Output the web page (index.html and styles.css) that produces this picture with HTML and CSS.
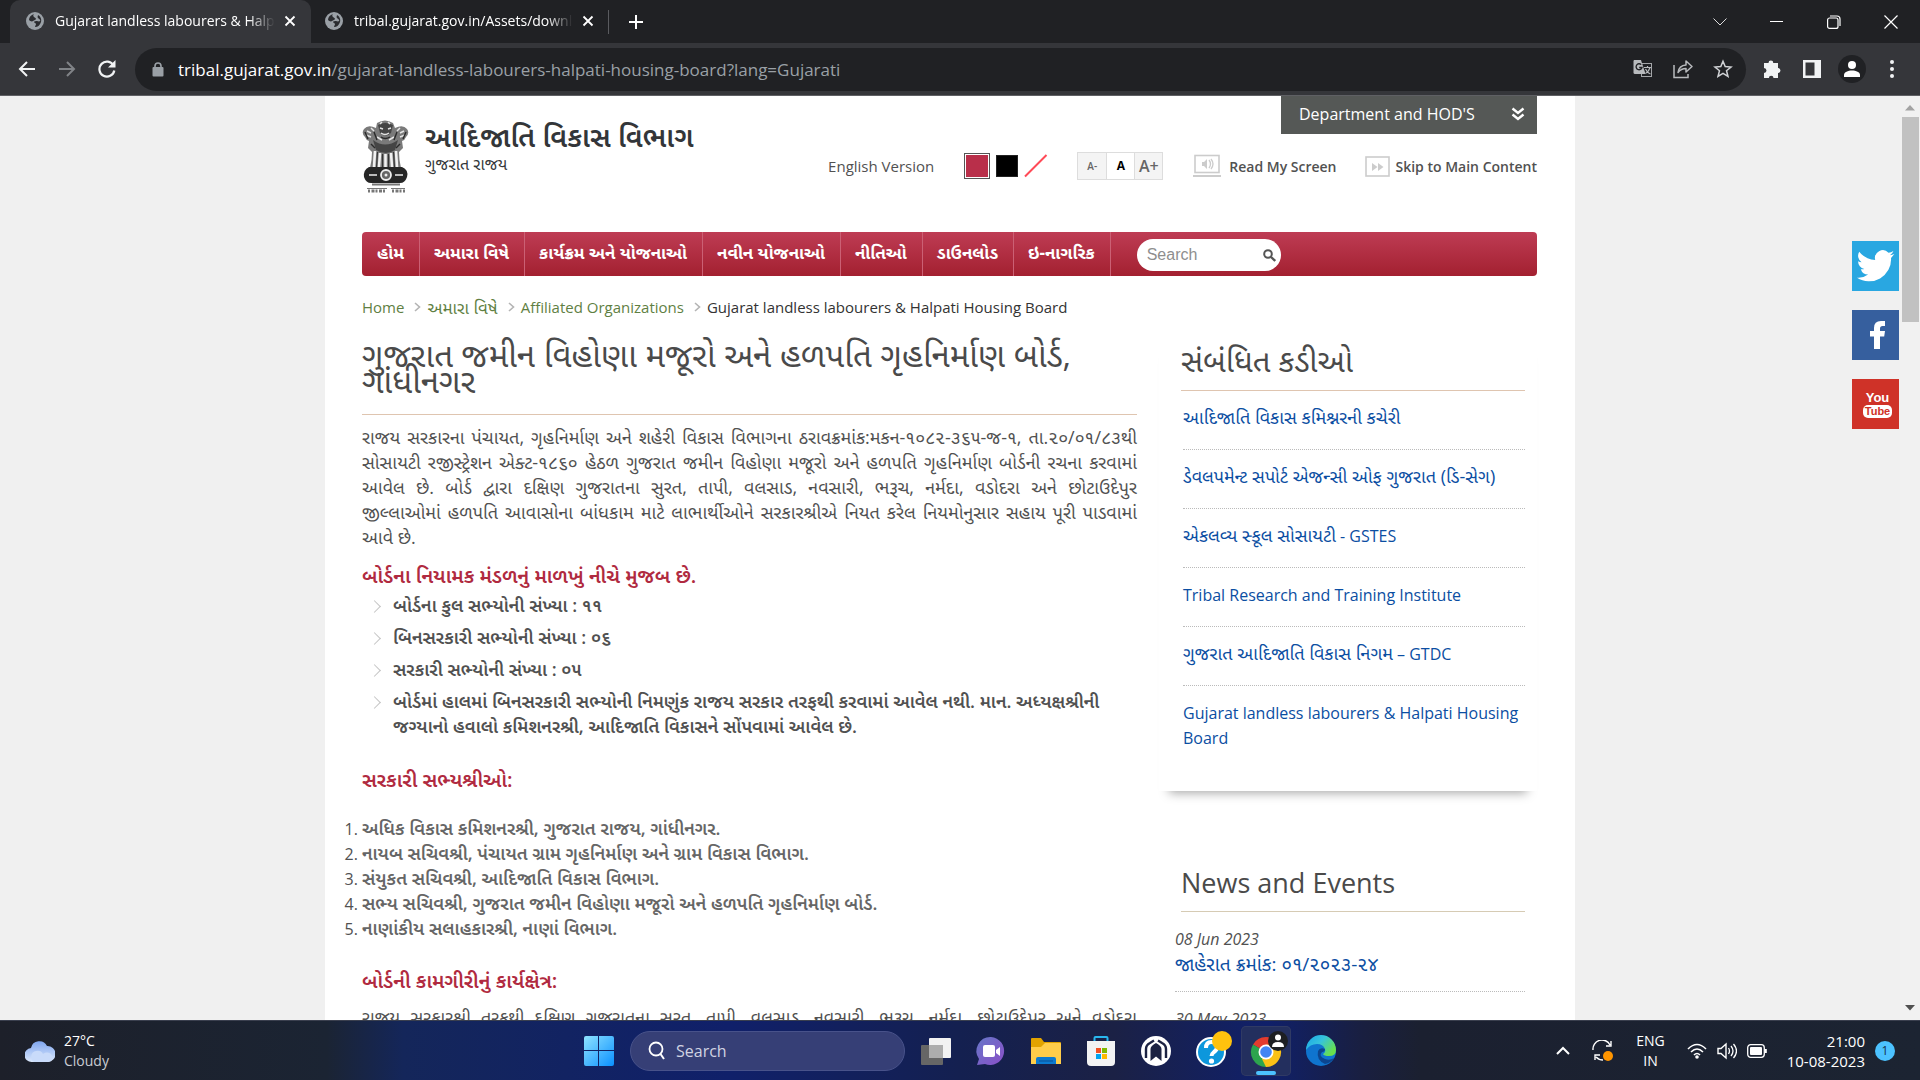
FILE: index.html
```html
<!DOCTYPE html>
<html lang="gu">
<head>
<meta charset="utf-8">
<title>Gujarat landless labourers &amp; Halpati Housing Board</title>
<link rel="stylesheet" href="styles.css">
</head>
<body>
<svg width="0" height="0" class="defs" aria-hidden="true">
  <symbol id="globe" viewBox="0 0 18 18"><circle cx="9" cy="9" r="9" fill="#9aa0a6"/><path d="M8 2c-1 1-1 2 0 3s2 1 2 2-2 1-3 2-3 0-4-1C3 5 5 3 8 2zM12 3c2 1 4 4 3 7-1 3-3 5-6 5 0-1 1-2 1-3s-2-1-2-2 2-1 3-1 2 1 3 0-1-2-2-3 0-2 0-3z" fill="#2b2c30"/></symbol>
  <symbol id="cross" viewBox="0 0 12 12"><path d="M1.500 1.500l9 9M10.500 1.500l-9 9" stroke="#fff" stroke-width="1.800"/></symbol>
  <symbol id="crumb" viewBox="0 0 7 10"><path d="M1 1l4.500 4L1 9" fill="none" stroke="#b4b4b4" stroke-width="1.600"/></symbol>
</svg>

<header class="browser">
  <div class="tabs">
    <div class="tab active"><svg class="fav"><use href="#globe"/></svg><span class="tab-text">Gujarat landless labourers &amp; Halpati</span><button class="plain" aria-label="Close tab"><svg width="12" height="12"><use href="#cross"/></svg></button></div>
    <div class="tab"><svg class="fav"><use href="#globe"/></svg><span class="tab-text">tribal.gujarat.gov.in/Assets/downloads</span><button class="plain" aria-label="Close tab"><svg width="12" height="12"><use href="#cross"/></svg></button></div>
    <button class="plain new-tab" aria-label="New tab"><svg width="16" height="16" viewBox="0 0 16 16"><path d="M8 1v14M1 8h14" stroke="#fff" stroke-width="2"/></svg></button>
    <div class="window-buttons">
      <button class="plain" aria-label="Search tabs"><svg width="14" height="8" viewBox="0 0 14 8"><path d="M.5.5L7 7 13.500.5" fill="none" stroke="#ddd"/></svg></button>
      <button class="plain" aria-label="Minimise"><svg width="13" height="13" viewBox="0 0 13 13"><path d="M0 6.500h13" stroke="#fff"/></svg></button>
      <button class="plain" aria-label="Restore"><svg width="14" height="14" viewBox="0 0 14 14"><rect x=".6" y="3" width="10.400" height="10.400" rx="2" fill="none" stroke="#fff" stroke-width="1.200"/><path d="M3 1h7q3 0 3 3v7" fill="none" stroke="#fff" stroke-width="1.200"/></svg></button>
      <button class="plain" aria-label="Close"><svg width="14" height="14" viewBox="0 0 14 14"><path d="M.5.5l13 13M13.500.5l-13 13" stroke="#fff" stroke-width="1.200"/></svg></button>
    </div>
  </div>
  <div class="toolbar">
    <button class="plain tool" aria-label="Back"><svg width="18" height="16" viewBox="0 0 18 16"><path d="M17 8H2M9 1L2 8l7 7" fill="none" stroke="#f1f3f4" stroke-width="2"/></svg></button>
    <button class="plain tool" aria-label="Forward"><svg width="18" height="16" viewBox="0 0 18 16"><path d="M1 8h15M9 1l7 7-7 7" fill="none" stroke="#808387" stroke-width="2"/></svg></button>
    <button class="plain tool" aria-label="Reload"><svg width="18" height="18" viewBox="0 0 18 18"><path d="M15.500 5.500A7.500 7.500 0 1 0 16.300 10.500" fill="none" stroke="#f1f3f4" stroke-width="2.200"/><path d="M17.500 0v7.500H10z" fill="#f1f3f4"/></svg></button>
    <div class="omnibox">
      <svg width="12" height="15" viewBox="0 0 12 15"><rect x=".5" y="5" width="11" height="9.500" rx="1" fill="#9aa0a6"/><path d="M3 6V4a3 3 0 0 1 6 0v2" fill="none" stroke="#9aa0a6" stroke-width="1.600"/></svg>
      <span class="url"><b>tribal.gujarat.gov.in</b>/gujarat-landless-labourers-halpati-housing-board?lang=Gujarati</span>
      <svg width="20" height="20" viewBox="0 0 20 20"><rect x="8.500" y="4.500" width="10" height="13" fill="none" stroke="#a3a5a8"/><path d="M1 1h7l4.500 14H2q-1.500 0-1.500-1.500V2z" fill="#b8babd"/><path d="M8.200 5.600A3 3 0 1 0 9 8.500H6.200" fill="none" stroke="#202124" stroke-width="1.300"/><path d="M11 8.500h7M14.500 7v1.500M17 8.500q-1 4-4.500 6M12.500 10q2 4 5 5" fill="none" stroke="#b8babd" stroke-width="1.200"/></svg>
      <svg width="20" height="20" viewBox="0 0 20 20"><path d="M1 6v12.500h14V15" fill="none" stroke="#b8babd" stroke-width="1.500"/><path d="M5 13.500q1-7 8-7.500V2l6 5.500-6 5.500V9.500q-5 0-8 4z" fill="none" stroke="#b8babd" stroke-width="1.500" stroke-linejoin="round"/></svg>
      <svg width="20" height="20" viewBox="0 0 20 20"><path d="M10 2.200l2.200 5.400 5.800.4-4.500 3.700 1.500 5.700-5-3.100-5 3.100 1.500-5.700L2 8l5.800-.4z" fill="none" stroke="#d0d2d5" stroke-width="1.500"/></svg>
    </div>
    <button class="plain tool" aria-label="Extensions"><svg width="20" height="20" viewBox="0 0 20 20"><path d="M2 4h4.500a2.400 2.400 0 0 1 4.800 0H16v5a2.500 2.500 0 0 1 0 5v5h-4.500a2.300 2.300 0 0 0-4.600 0H2v-5a2.400 2.400 0 0 0 0-5z" fill="#f1f3f4"/></svg></button>
    <button class="plain tool" aria-label="Side panel"><svg width="18" height="18" viewBox="0 0 18 18"><path fill="#f1f3f4" fill-rule="evenodd" d="M0 0h18v18H0zM2.500 2.500v13h9v-13z"/></svg></button>
    <button class="plain tool" aria-label="Profile"><svg width="28" height="28" viewBox="0 0 28 28"><circle cx="14" cy="14" r="14" fill="#202124"/><circle cx="14" cy="10" r="4" fill="#fff"/><path d="M6 22v-2c0-6 16-6 16 0v2z" fill="#fff"/></svg></button>
    <button class="plain tool" aria-label="Menu"><svg width="4" height="18" viewBox="0 0 4 18"><circle cx="2" cy="2" r="2" fill="#f1f3f4"/><circle cx="2" cy="9" r="2" fill="#f1f3f4"/><circle cx="2" cy="16" r="2" fill="#f1f3f4"/></svg></button>
  </div>
</header>

<div class="viewport">
  <div class="canvas">
    <div class="page">
      <header class="site-head">
        <div class="brand">
          <svg width="47" height="74" viewBox="0 0 47 74">
            <path d="M15 3q8-5 16 0l2 5q8-4 12 1 3 4-1 8-1 3-4 4l1 7-4 4q0 8 2 16H8q2-8 2-16l-4-4 1-7q-3-1-4-4-4-4-1-8 4-5 12-1z" fill="#7a7a7a"/>
            <path d="M16 5q7-4 15 0l-2 8q-5 5-11 0zM11 20q12 9 25 0l-3 10q-9 6-19 0z" fill="#454545"/>
            <path d="M18 8l3 1M29 8l-3 1M19 13q4 3 8 0M5 11l4 2M42 11l-4 2M4 15l5 2M43 15l-5 2M15 17l5 3M32 17l-5 3M18 4l2-2M28 4l-2-2M9 8l3 3M38 8l-3 3" stroke="#e4e4e4" stroke-width="1.500" fill="none"/>
            <path d="M3 12l3 7M44 12l-3 7M12 12l3 8M35 12l-3 8M9 24l4 4M38 24l-4 4M19 17q4 3 9 0" stroke="#2a2a2a" stroke-width="1.400" fill="none"/>
            <path d="M13 31l-1 16M18 33l-1 14M23.500 34v13M29 33l1 14M34 31l1 16" stroke="#f2f2f2" stroke-width="2.600"/>
            <path d="M15.500 32l-1 15M20.500 34v13M26.500 34v13M31.500 32l1 15" stroke="#333"/>
            <path d="M7 47h33q7 3 5 10-2 6-7 6H9q-5 0-7-6-1-7 5-10z" fill="#262626"/>
            <circle cx="24" cy="55" r="5" fill="#666" stroke="#eee" stroke-width="1.800"/><circle cx="24" cy="55" r="1.500" fill="#eee"/>
            <path d="M7 55h8M33 55h8" stroke="#bbb" stroke-width="2"/><path d="M10 64.500h28" stroke="#777" stroke-width="2"/>
            <path d="M5 68.500h20M29 68.500h14" stroke="#777" stroke-width="1"/><path d="M6 71h18M30 71h13" stroke="#777" stroke-width="3" stroke-dasharray="2 1.500 3 1"/>
          </svg>
          <div>
            <div class="brand-name">આદિજાતિ વિકાસ વિભાગ</div>
            <div class="brand-sub">ગુજરાત રાજય</div>
          </div>
        </div>
        <div class="head-right">
          <button class="dept">Department and HOD'S <svg width="14" height="14" viewBox="0 0 14 14"><path d="M1.500 1.500L7 6l5.500-4.500M1.500 7.500L7 12l5.500-4.500" fill="none" stroke="#fff" stroke-width="2.400"/></svg></button>
          <div class="access">
            <a href="#" class="english">English Version</a>
            <div class="themes"><button class="swatch red" aria-label="Red theme"></button><button class="swatch black" aria-label="Black theme"></button><button class="plain" aria-label="No theme"><svg width="24" height="24" viewBox="0 0 24 24"><path d="M1 22.500L22.500 1" stroke="#ff4a57" stroke-width="2"/></svg></button></div>
            <div class="sizes"><button class="small">A-</button><button class="mid">A</button><button class="big">A+</button></div>
            <a href="#" class="tool-link"><svg width="28" height="24" viewBox="0 0 28 24"><rect x="2" y="1.500" width="24" height="17" fill="#fff" stroke="#ccc" stroke-width="1.600"/><path d="M9 8h2l3-3v10l-3-3H9z" fill="#ccc"/><path d="M16 6q3 4 0 8M18 5q4 5 0 10" fill="none" stroke="#ccc" stroke-width="1.300"/><path d="M0 21h28v2H0z" fill="#ccc"/></svg>Read My Screen</a>
            <a href="#" class="tool-link skip"><svg width="25" height="24" viewBox="0 0 25 24"><rect x="1" y="3" width="23" height="19" fill="#fff" stroke="#ccc" stroke-width="1.600"/><path d="M7 9l5.500 4L7 17zM13 9l5.500 4-5.500 4z" fill="#ccc"/></svg>Skip to Main Content</a>
          </div>
        </div>
      </header>

      <nav class="menu">
        <a href="#">હોમ</a><a href="#">અમારા વિષે</a><a href="#">કાર્યક્રમ અને યોજનાઓ</a><a href="#">નવીન યોજનાઓ</a><a href="#">નીતિઓ</a><a href="#">ડાઉનલોડ</a><a href="#">ઇ-નાગરિક</a>
        <form class="search"><input type="text" placeholder="Search" aria-label="Search"><button class="plain" type="button" aria-label="Go"><svg width="13" height="13" viewBox="0 0 13 13"><circle cx="5" cy="5" r="3.800" fill="none" stroke="#555" stroke-width="2"/><path d="M8 8l4.200 4" stroke="#555" stroke-width="2.400"/></svg></button></form>
      </nav>

      <div class="crumbs"><a href="#">Home</a><svg width="7" height="10"><use href="#crumb"/></svg><a href="#" class="crumb-gu">અમારા વિષે</a><svg width="7" height="10"><use href="#crumb"/></svg><a href="#">Affiliated Organizations</a><svg width="7" height="10"><use href="#crumb"/></svg><span>Gujarat landless labourers &amp; Halpati Housing Board</span></div>

      <div class="columns">
        <main class="content">
          <h1>ગુજરાત જમીન વિહોણા મજૂરો અને હળપતિ ગૃહનિર્માણ બોર્ડ, ગાંધીનગર</h1>
          <p>રાજય સરકારના પંચાયત, ગૃહનિર્માણ અને શહેરી વિકાસ વિભાગના ઠરાવક્રમાંક:મકન-૧૦૮૨-૩૬૫-જ-૧, તા.૨૦/૦૧/૮૩થી સોસાયટી રજીસ્ટ્રેશન એક્ટ-૧૮૬૦ હેઠળ ગુજરાત જમીન વિહોણા મજૂરો અને હળપતિ ગૃહનિર્માણ બોર્ડની રચના કરવામાં આવેલ છે. બોર્ડ દ્વારા દક્ષિણ ગુજરાતના સુરત, તાપી, વલસાડ, નવસારી, ભરૂચ, નર્મદા, વડોદરા અને છોટાઉદેપુર જીલ્લાઓમાં&nbsp;હળપતિ આવાસોના બાંધકામ માટે લાભાર્થીઓને સરકારશ્રીએ નિયત કરેલ નિયમોનુસાર સહાય પૂરી પાડવામાં આવે છે.</p>
          <h2>બોર્ડના નિયામક મંડળનું માળખું નીચે મુજબ છે.</h2>
          <ul>
            <li>બોર્ડના કુલ સભ્યોની સંખ્યા : ૧૧</li>
            <li>બિનસરકારી સભ્યોની સંખ્યા : ૦૬</li>
            <li>સરકારી સભ્યોની સંખ્યા : ૦૫</li>
            <li>બોર્ડમાં હાલમાં બિનસરકારી સભ્યોની નિમણુંક રાજય સરકાર તરફથી કરવામાં આવેલ નથી. માન. અધ્યક્ષશ્રીની જગ્યાનો હવાલો કમિશનરશ્રી, આદિજાતિ વિકાસને સોંપવામાં આવેલ છે.</li>
          </ul>
          <h2>સરકારી સભ્યશ્રીઓ:</h2>
          <ol>
            <li><b>અધિક વિકાસ કમિશનરશ્રી, ગુજરાત રાજય, ગાંધીનગર.</b></li>
            <li><b>નાયબ સચિવશ્રી, પંચાયત ગ્રામ ગૃહનિર્માણ અને ગ્રામ વિકાસ વિભાગ.</b></li>
            <li><b>સંયુકત સચિવશ્રી, આદિજાતિ વિકાસ વિભાગ.</b></li>
            <li><b>સભ્ય સચિવશ્રી, ગુજરાત જમીન વિહોણા મજૂરો અને હળપતિ ગૃહનિર્માણ બોર્ડ.</b></li>
            <li><b>નાણાંકીય સલાહકારશ્રી, નાણાં વિભાગ.</b></li>
          </ol>
          <h2>બોર્ડની કામગીરીનું કાર્યક્ષેત્ર:</h2>
          <p>રાજય સરકારશ્રી તરફથી દક્ષિણ ગુજરાતના સુરત, તાપી, વલસાડ, નવસારી, ભરૂચ, નર્મદા, છોટાઉદેપુર અને વડોદરા જીલ્લાઓમાં હળપતિ આવાસોના બાંધકામની કામગીરી કરવામાં આવે છે.</p>
        </main>
        <aside class="side">
          <section class="card">
            <h3 class="wide">સંબંધિત કડીઓ</h3>
            <ul class="links">
              <li><a href="#"><span class="gu">આદિજાતિ વિકાસ કમિશ્નરની કચેરી</span></a></li>
              <li><a href="#"><span class="gu">ડેવલપમેન્ટ સપોર્ટ એજન્સી ઓફ ગુજરાત (ડિ-સેગ)</span></a></li>
              <li><a href="#"><span class="gu">એકલવ્ય સ્કૂલ સોસાયટી</span> - GSTES</a></li>
              <li><a href="#">Tribal Research and Training Institute</a></li>
              <li><a href="#"><span class="gu">ગુજરાત આદિજાતિ વિકાસ નિગમ</span> – GTDC</a></li>
              <li><a href="#">Gujarat landless labourers &amp; Halpati Housing Board</a></li>
            </ul>
          </section>
          <section class="news">
            <h3>News and Events</h3>
            <ul class="news-list">
              <li><em>08 Jun 2023</em><a href="#">જાહેરાત ક્રમાંક: ૦૧/૨૦૨૩-૨૪</a></li>
              <li><em>30 May 2023</em><a href="#">જાહેરાત</a></li>
            </ul>
          </section>
        </aside>
      </div>
    </div>
    <div class="social">
      <a href="#" class="tw" aria-label="Twitter"><svg width="38" height="34" viewBox="0 0 24 20"><path d="M23.600 2.400a9.700 9.700 0 0 1-2.800.8A4.900 4.900 0 0 0 23 .5a9.800 9.800 0 0 1-3.100 1.200 4.900 4.900 0 0 0-8.400 4.500A13.900 13.900 0 0 1 1.400 1a4.900 4.900 0 0 0 1.500 6.600 4.900 4.900 0 0 1-2.200-.6 4.900 4.900 0 0 0 3.900 4.900 4.900 4.900 0 0 1-2.200.1 4.900 4.900 0 0 0 4.600 3.400A9.900 9.900 0 0 1 0 17.400 13.900 13.900 0 0 0 21.500 5z" fill="#fff"/></svg></a>
      <a href="#" class="fb" aria-label="Facebook"><svg width="18" height="30" viewBox="0 0 18 30"><path d="M5 29V16.500H1V11h4V8q0-7 7-7h4v5h-2.500q-2.500 0-2.500 2.500V11h5l-.8 5.500H11V29z" fill="#fff"/></svg></a>
      <a href="#" class="yt"><span class="you">You</span><span class="tube">Tube</span></a>
    </div>
  </div>
  <div class="scrollbar"><svg width="10" height="6" viewBox="0 0 10 6"><path d="M0 5.500L5 0l5 5.500z" fill="#a3a3a3"/></svg><div class="thumb"></div><svg width="10" height="6" viewBox="0 0 10 6"><path d="M0 0h10L5 5.500z" fill="#505050"/></svg></div>
</div>

<footer class="taskbar">
  <div class="weather">
    <svg width="30" height="24" viewBox="0 0 30 24"><defs><linearGradient id="cl" x2="0" y2="1"><stop stop-color="#7fa6f0"/><stop offset="1" stop-color="#dbe8fb"/></linearGradient></defs><path d="M7 23a7 7 0 0 1-1-14A8.500 8.500 0 0 1 22 7a8 8 0 0 1 1 16z" fill="url(#cl)"/><path d="M9 23a6 6 0 0 1 2-11q5-1 7 3 6-4 10 3-1 5-6 5z" fill="#c9dbfa"/></svg>
    <div><div>27°C</div><div class="dim">Cloudy</div></div>
  </div>
  <div class="apps">
    <button class="app" aria-label="Start"><svg width="30" height="30" viewBox="0 0 30 30"><defs><linearGradient id="wn" x2="1" y2="1"><stop stop-color="#8fe3ff"/><stop offset="1" stop-color="#0a90ff"/></linearGradient></defs><path d="M0 2q0-2 2-2h12v14H0zM15 0h13q2 0 2 2v12H15zM0 15h14v15H2q-2 0-2-2zM15 15h15v13q0 2-2 2H15z" fill="url(#wn)"/></svg></button>
    <label class="task-search"><svg width="20" height="20" viewBox="0 0 20 20"><circle cx="11" cy="8" r="6.500" fill="none" stroke="#fff" stroke-width="1.800"/><path d="M15.500 13L19 18" stroke="#fff" stroke-width="2"/></svg><input type="text" placeholder="Search" aria-label="Search the taskbar"></label>
    <button class="app" aria-label="Task view"><svg width="30" height="30" viewBox="0 0 30 30"><rect x="8" y="2" width="22" height="20" rx="1" fill="#f2f2f2"/><rect x="0" y="9" width="22" height="20" rx="1" fill="#666"/><path d="M8 9h14v13H8z" fill="#adadad"/></svg></button>
    <button class="app" aria-label="Chat"><svg width="30" height="30" viewBox="0 0 30 30"><defs><linearGradient id="ch" x2="1" y2="1"><stop stop-color="#6677c8"/><stop offset="1" stop-color="#8a4fc8"/></linearGradient></defs><path d="M15 1a14 14 0 1 1-6 27l-8 1 2-6A14 14 0 0 1 15 1z" fill="url(#ch)"/><rect x="7" y="9" width="12" height="12" rx="2" fill="#fff"/><path d="M20 14l4-3v9l-4-3z" fill="#fff"/></svg></button>
    <button class="app" aria-label="File Explorer"><svg width="30" height="28" viewBox="0 0 30 28"><path d="M0 8V2q0-1 1-1h9l3 4h16q1 0 1 1v20H0z" fill="#e2a300"/><path d="M0 10h10l4-4h15q1 0 1 1v20H0z" fill="#ffcd4a"/><path d="M5 27v-5q0-2 2-2h16q2 0 2 2v5z" fill="#0c7ad0"/><path d="M8 24h14" stroke="#0a4f93"/></svg></button>
    <button class="app" aria-label="Store"><svg width="30" height="30" viewBox="0 0 30 30"><path d="M8.500 7V2q0-1 1-1h11q1 0 1 1v5" fill="none" stroke="#29b7ee" stroke-width="2"/><path d="M1 5h28v21q0 4-4 4H5q-4 0-4-4z" fill="#f3f3f3"/><path d="M10 12h5v5h-5z" fill="#f25022"/><path d="M16 12h5v5h-5z" fill="#7fba00"/><path d="M10 18h5v5h-5z" fill="#00a4ef"/><path d="M16 18h5v5h-5z" fill="#ffb900"/></svg></button>
    <button class="app" aria-label="Assistant"><svg width="30" height="30" viewBox="0 0 30 30"><circle cx="15" cy="15" r="15" fill="#fff"/><path d="M5 22V13q0-4 4-6l4-2.500M25 22V13q0-4-4-6l-4-2.500" fill="none" stroke="#1c2242" stroke-width="2.400"/><path d="M9.500 13q0-3 5.500-6 5.500 3 5.500 6v12L15 20.500 9.500 25z" fill="#1c2242"/></svg></button>
    <button class="app" aria-label="Help"><svg width="30" height="38" viewBox="0 0 30 38"><circle cx="15" cy="20" r="14" fill="#0d97dc" stroke="#fff" stroke-width="2"/><path d="M10 16q0-6 5.500-6t5.500 5q0 3-3 5-2.500 2-2.500 4" fill="none" stroke="#fff" stroke-width="4"/><circle cx="15.500" cy="29" r="2.600" fill="#fff"/><circle cx="26" cy="9" r="10" fill="#ffc20e"/></svg></button>
    <button class="app current" aria-label="Chrome"><svg width="32" height="38" viewBox="0 0 32 38"><path d="M16 20L3 12.500A15 15 0 0 1 29 12.500L16 13z" fill="#e33b2e"/><path d="M16 20L29 12.500A15 15 0 0 1 16 35z" fill="#fbc116"/><path d="M16 20L16 35A15 15 0 0 1 3 12.500z" fill="#2da44e"/><path d="M16 20l6.500 4L16 35l-4-8z" fill="#fbc116"/><path d="M16 12.500h13L22 19z" fill="#fbc116"/><circle cx="16" cy="20" r="7.500" fill="#fff"/><circle cx="16" cy="20" r="5.800" fill="#4285f4"/><circle cx="28" cy="9" r="10" fill="#1d1f22"/><circle cx="28" cy="5.500" r="3" fill="#fff"/><path d="M22 15q0-5 6-5t6 5z" fill="#fff"/></svg></button>
    <button class="app" aria-label="Edge"><svg width="30" height="30" viewBox="0 0 30 30"><defs><linearGradient id="ed" x2="1" y2=".6"><stop stop-color="#18a5e8"/><stop offset=".5" stop-color="#36c3dc"/><stop offset="1" stop-color="#69e04b"/></linearGradient></defs><circle cx="15" cy="15" r="15" fill="#0f74cf"/><path d="M0 14A15 15 0 0 1 30 14q0 6-7 6-5 0-6-2 3-2 2-5-2-5-8-5Q4 8 0 14z" fill="url(#ed)"/><path d="M19 13q-5-2-7 2-2 9 7 13 6-1 9-6-4 3-9 1-7-3-3-7 3 0 3-3z" fill="#0c458f"/></svg></button>
  </div>
  <div class="tray">
    <svg width="14" height="9" viewBox="0 0 14 9"><path d="M1 8l6-6 6 6" fill="none" stroke="#fff" stroke-width="2"/></svg>
    <svg class="sync" width="22" height="22" viewBox="0 0 22 22"><path d="M1 10A9 9 0 0 1 18 5M19 1v5h-5M3 20v-5h5M4 17q3 3 7 3" fill="none" stroke="#fff" stroke-width="1.400"/><circle cx="16" cy="16" r="5" fill="#ff9500"/></svg>
    <div class="lang"><div>ENG</div><div>IN</div></div>
    <svg width="20" height="16" viewBox="0 0 20 16"><path d="M1 6q9-9 18 0M4 9q6-6 12 0M7 12q3-3 6 0" fill="none" stroke="#fff" stroke-width="1.600"/><circle cx="10" cy="14" r="1.800" fill="#fff"/></svg>
    <svg width="20" height="18" viewBox="0 0 20 18"><path d="M1 6.500h3L9 2v14l-5-4.500H1z" fill="none" stroke="#fff" stroke-width="1.400"/><path d="M11.500 6q2 3 0 6M14 4q4 5 0 10M16.500 2q6 7 0 14" fill="none" stroke="#fff" stroke-width="1.300"/></svg>
    <svg width="20" height="14" viewBox="0 0 20 14"><rect x=".7" y=".7" width="16.600" height="12.600" rx="3" fill="none" stroke="#fff" stroke-width="1.300"/><rect x="3" y="3" width="12" height="8" rx="1" fill="#fff"/><path d="M18.800 5v4" stroke="#fff" stroke-width="2"/></svg>
    <div class="clock"><div>21:00</div><div>10-08-2023</div></div>
    <span class="badge">1</span>
  </div>
</footer>
</body>
</html>
```
FILE: styles.css
```css
* { box-sizing: border-box; }
body {
  margin: 0;
  height: 100vh;
  display: flex;
  flex-direction: column;
  overflow: hidden;
  font-family: "Open Sans", "Noto Sans Gujarati", "Noto Sans", sans-serif;
  font-size: 16px;
  line-height: 25px;
  color: #515151;
}
svg { display: block; flex: none; }
a { text-decoration: none; color: inherit; }
ul, ol { margin: 0; padding: 0; }
button, input { font-family: inherit; }
.defs { position: absolute; }
.plain { border: 0; background: none; padding: 0; display: flex; align-items: center; justify-content: center; }

/* browser frame */
.browser { background: #35363a; border-bottom: 1px solid #5f6064; color: #fff; }
.tabs { display: flex; align-items: center; height: 43px; background: #202124; padding: 0 1px 0 10px; font-size: 14px; }
.tab { width: 301px; height: 43px; display: flex; align-items: center; padding: 0 15px 2px 16px; }
.tab + .tab { position: relative; width: 298px; padding: 0 15px 2px 14px; }
.tab + .tab::after { content: ""; position: absolute; right: 0; top: 10px; height: 24px; border-right: 1px solid #5a5b5f; }
.tab.active { background: #35363a; border-radius: 10px 10px 0 0; }
.fav { width: 18px; height: 18px; margin-right: 11px; }
.tab-text { flex: 1; overflow: hidden; white-space: nowrap; margin-right: 9px; -webkit-mask-image: linear-gradient(to right, #000 88%, transparent); mask-image: linear-gradient(to right, #000 88%, transparent); }
.new-tab { width: 54px; height: 40px; }
.window-buttons { margin-left: auto; display: flex; height: 36px; }
.window-buttons button { width: 57px; }
.toolbar { display: flex; align-items: center; height: 52px; padding: 0 8px 0 7px; }
.tool { width: 40px; height: 40px; }
.omnibox { flex: 1; display: flex; align-items: center; gap: 20px; height: 43px; border-radius: 22px; background: #202124; margin: 0 6px 0 8px; padding: 0 13px 0 17px; }
.url { flex: 1; margin-left: -6px; font-size: 17px; color: #9aa0a6; }
.url b { font-weight: 400; color: #fff; }

/* page canvas */
.viewport { flex: 1; min-height: 0; display: flex; background: #f0f0f0; }
.canvas { flex: 1; min-width: 0; overflow: hidden; position: relative; }
.page { max-width: 1250px; margin: 0 auto; padding: 0 38px 0 37px; background: #fff; }
.scrollbar { width: 20px; display: flex; flex-direction: column; align-items: center; padding: 9px 1px; background: #f1f1f1; }
.thumb { width: 17px; height: 205px; margin: 6px 0 auto; background: #c1c1c1; }

.site-head { display: flex; justify-content: space-between; height: 136px; }
.brand { display: flex; gap: 16px; padding-top: 24px; }
.brand-name { font-size: 28px; line-height: 32px; font-weight: 600; color: #333639; }
.brand-sub { line-height: 24px; color: #333639; }
.head-right { display: flex; flex-direction: column; align-items: flex-end; }
.dept { display: flex; align-items: center; justify-content: space-between; width: 256px; height: 38px; border: 0; padding: 0 12px 2px 18px; background: #555856; color: #fff; font-size: 16px; }
.access { display: flex; align-items: center; margin-top: 14px; height: 36px; font-size: 15px; }
.english { margin-right: 30px; }
.themes { display: flex; align-items: center; gap: 6px; margin-right: 29px; }
.swatch { padding: 0; border: 1px solid #555; width: 22px; height: 22px; }
.red { width: 26px; height: 26px; background: #b92f4a; box-shadow: inset 0 0 0 1px #fff; }
.black { background: #000; border-color: #222; }
.sizes { display: flex; border: 1px solid #ddd; margin-right: 30px; }
.sizes button { width: 28px; height: 26px; padding: 0; border: 0; background: #f4f4f4; font-weight: 600; color: #666; line-height: 26px; }
.sizes button + button { border-left: 1px solid #ddd; }
.sizes .small { font-size: 10px; }
.sizes .mid { font-size: 12px; background: #fff; color: #000; font-weight: 700; }
.sizes .big { font-size: 16px; }
.tool-link { display: flex; align-items: center; gap: 8px; font-size: 14px; font-weight: 600; }
.skip { margin-left: 28px; gap: 6px; }

.menu { display: flex; height: 44px; border-radius: 4px; background: linear-gradient(#be3c54, #a32030); color: #fff; font-size: 17px; font-weight: 700; }
.menu > a { padding: 0 15px 0 14px; line-height: 42px; border-right: 1px solid #cb6074; white-space: nowrap; }
.menu > a:first-child { padding-left: 15px; }
.search { display: flex; align-items: center; width: 144px; height: 32px; margin: 7px 0 0 26px; padding: 0 5px 0 10px; background: #fff; border-radius: 16px; }
.search input { flex: 1; min-width: 0; border: 0; padding: 0; background: none; outline: 0; font-family: "Liberation Sans", sans-serif; font-size: 16px; }
.search input::placeholder { color: #8e8e8e; }

.crumbs { display: flex; align-items: center; height: 62px; font-size: 15px; color: #333; }
.crumbs a { color: #5f7f43; }
.crumbs .crumb-gu { font-size: 17px; }
.crumbs svg { margin: 0 6px 0 10px; }

.columns { display: flex; }
.content { flex: 1; min-width: 0; margin-right: 22px; }
h1 { margin: 0 0 10px; padding: 4px 0 20px; border-bottom: 1px solid #dfc5b0; font-size: 33px; line-height: 26px; font-weight: 400; color: #4a4a4a; }
p { margin: 0; font-size: 18px; text-align: justify; }
h2 { margin: 13px 0 5px; font-size: 20px; line-height: 25px; font-weight: 600; color: #b02a40; }
.content ul { list-style: none; padding-left: 31px; font-size: 18px; font-weight: 600; }
.content ul li { margin-bottom: 7px; position: relative; }
.content ul li::before { content: ""; position: absolute; left: -23px; top: 9px; width: 8px; height: 8px; border: solid #c4c4c4; border-width: 1px 1px 0 0; transform: rotate(45deg); }
.content ul + h2 { margin: 28px 0 25px; }
ol b, .gu { font-size: 18px; line-height: 1; }
ol b { font-weight: 600; color: #666; }
ol + h2 { margin: 26px 0 12px; }

.side { width: 378px; }
.card { padding: 0 12px 40px 22px; box-shadow: 0 12px 10px -10px rgba(0, 0, 0, .35); background: #fff; }
h3 { margin: 0; padding: 6px 0 10px; border-bottom: 1px solid #dfc5b0; font-size: 27px; line-height: 36px; font-weight: 400; color: #4a4a4a; }
.wide { padding: 4px 0 12px; font-size: 31px; }
.links { list-style: none; margin-left: 2px; color: #0b4ea2; }
.links li { padding: 15px 0 18px; border-bottom: 1px dotted #bbb; }
.links li:last-child { border: 0; padding-bottom: 0; }
.news { padding: 68px 12px 0 22px; }
.news h3 { border-color: #d6cbb4; }
.news-list { list-style: none; margin-left: -6px; }
.news-list li { padding: 15px 0 14px; border-bottom: 1px dotted #bbb; }
.news-list em { display: block; }
.news-list a { display: block; color: #0b4ea2; font-size: 19px; }

.social { position: absolute; top: 145px; right: 1px; display: flex; flex-direction: column; gap: 19px; }
.social a { width: 47px; height: 50px; display: flex; flex-direction: column; align-items: center; justify-content: center; color: #fff; }
.tw { background: #29a7e1; }
.fb { background: #365f9e; padding-left: 4px; }
.yt { background: #cf3228; font: 700 13px/14px "Liberation Sans Narrow", "Liberation Sans", sans-serif; padding-left: 4px; }
.tube { font-size: 11px; line-height: 13px; background: #fff; color: #cf3228; border-radius: 5px; padding: 0 2px; }

/* taskbar */
.taskbar { height: 60px; display: grid; grid-template-columns: 1fr auto 1fr; align-items: center; border-top: 1px solid #3a3f4e; background: linear-gradient(90deg, #1d202a 0, #1b2433 17%, #14265a 21%, #10206a 38%, #142050 50%, #1b2145 58%, #10206a 66%, #191f40 71%, #1b2030 74%, #1c2432 100%); color: #fff; font-size: 14px; line-height: 20px; }
.weather { display: flex; align-items: center; gap: 9px; padding-left: 25px; }
.dim { color: #c9ccd2; }
.apps { display: flex; align-items: center; gap: 5px; }
.app { width: 50px; height: 50px; padding: 0; border: 0; border-radius: 5px; background: none; display: flex; align-items: center; justify-content: center; }
.app svg { overflow: visible; }
.current { position: relative; background: #232f5e; box-shadow: inset 0 0 0 1px #303a64; }
.current::after { content: ""; position: absolute; left: 15px; bottom: 1px; width: 20px; height: 4px; border-radius: 2px; background: #4cc2ff; }
.task-search { display: flex; align-items: center; gap: 11px; width: 275px; height: 40px; margin: 0 1px; padding: 0 14px; border: 1px solid #48528a; border-radius: 20px; background: #363f76; }
.task-search input { flex: 1; min-width: 0; padding: 0; border: 0; background: none; outline: 0; font-size: 16px; }
.task-search input::placeholder { color: #d0d3e2; }
.tray { display: flex; align-items: center; justify-content: flex-end; padding-right: 25px; gap: 10px; }
.sync { margin: 0 12px 0 12px; }
.lang { text-align: center; margin-right: 12px; }
.clock { text-align: right; margin-left: 10px; font-size: 15px; }
.badge { width: 20px; height: 20px; border-radius: 50%; background: #4cc2ff; color: #14344a; font-size: 12px; text-align: center; }
```
